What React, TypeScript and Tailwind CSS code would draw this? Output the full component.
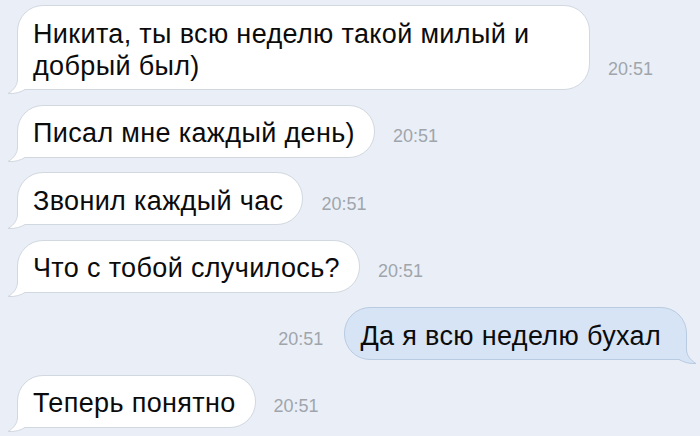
import type { ReactNode } from 'react';

const FONT = { fontFamily: '"Liberation Sans", Arial, "Helvetica Neue", sans-serif' };

// хвостик пузыря (рисуется поверх нижнего угла)
function Tail({ fill, stroke, side }: { fill: string; stroke: string; side: 'left' | 'right' }) {
  return (
    <svg
      width="30"
      height="30"
      viewBox="0 0 30 30"
      className={
        side === 'left'
          ? 'pointer-events-none absolute bottom-[-6px] left-[-11px]'
          : 'pointer-events-none absolute bottom-[-6px] right-[-11px] -scale-x-100'
      }
    >
      <path d="M10.5 0 L10.5 14 C10.5 20 7 25 1 28.5 C8 29 14 27 18 24.5 L24 24.5 L24 0 Z" fill={fill} />
      <path
        d="M10.5 0 L10.5 14 C10.5 20 7 25 1 28.5 C8 29 14 27 18 24.5 L24 24.5"
        fill="none"
        stroke={stroke}
        strokeWidth="1"
      />
    </svg>
  );
}

function Time() {
  return <span className="mb-[11.5px] shrink-0 text-[18px] leading-[20px] text-[#a0a5ac]">20:51</span>;
}

function Incoming({ children, wide }: { children: ReactNode; wide?: boolean }) {
  return (
    <div className="flex items-end gap-[18px]">
      <div
        className={`relative rounded-[26px] rounded-bl-none border border-[#d2d8e0] bg-white pb-[7.5px] pl-[15px] pr-[19px] pt-[11.5px] text-[27px] leading-[32px] tracking-[0.35px] text-[#0b0b0b] ${
          wide ? 'w-[573px]' : ''
        }`}
      >
        {children}
        <Tail fill="#ffffff" stroke="#d2d8e0" side="left" />
      </div>
      <Time />
    </div>
  );
}

function Outgoing({ children }: { children: ReactNode }) {
  return (
    <div className="flex items-end justify-end gap-[21px]">
      <Time />
      <div className="relative rounded-[26px] rounded-br-none border border-[#b9cbe1] bg-[#d7e4f5] pb-[7.5px] pl-[15px] pr-[25px] pt-[11.5px] text-[27px] leading-[32px] tracking-[0.35px] text-[#0b0b0b]">
        {children}
        <Tail fill="#d7e4f5" stroke="#b9cbe1" side="right" />
      </div>
    </div>
  );
}

export default function App() {
  return (
    <div className="h-[436px] w-[700px] overflow-hidden bg-[#eaeff7]" style={FONT}>
      <div className="flex flex-col gap-[14.5px] pl-[17px] pr-[13px] pt-[5px]">
        <Incoming wide>Никита, ты всю неделю такой милый и добрый был)</Incoming>
        <Incoming>Писал мне каждый день)</Incoming>
        <Incoming>Звонил каждый час</Incoming>
        <Incoming>Что с тобой случилось?</Incoming>
        <Outgoing>Да я всю неделю бухал</Outgoing>
        <Incoming>Теперь понятно</Incoming>
      </div>
    </div>
  );
}
